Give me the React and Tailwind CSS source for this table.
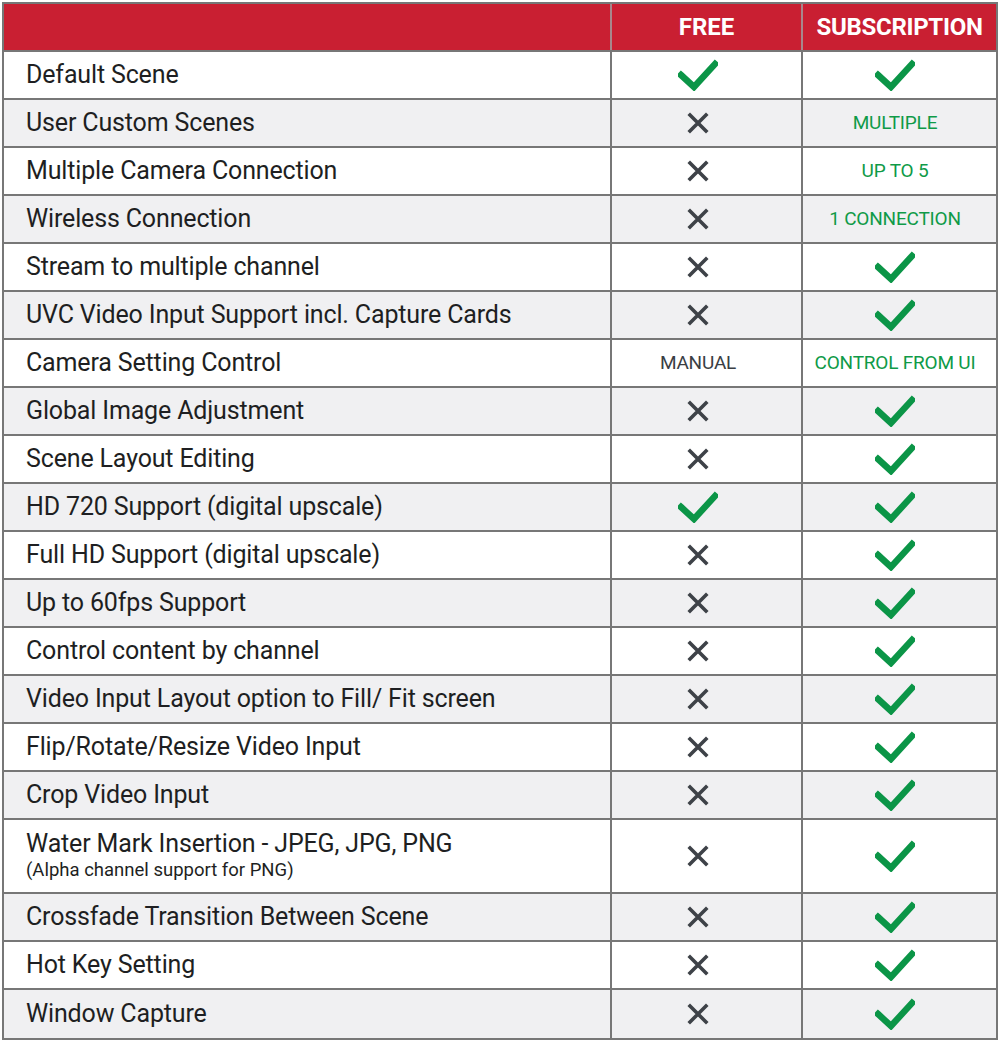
const rows = [
  { label: 'Default Scene', free: 'check', sub: 'check' },
  { label: 'User Custom Scenes', free: 'x', sub: 'MULTIPLE' },
  { label: 'Multiple Camera Connection', free: 'x', sub: 'UP TO 5' },
  { label: 'Wireless Connection', free: 'x', sub: '1 CONNECTION' },
  { label: 'Stream to multiple channel', free: 'x', sub: 'check' },
  { label: 'UVC Video Input Support incl. Capture Cards', free: 'x', sub: 'check' },
  { label: 'Camera Setting Control', free: 'MANUAL', sub: 'CONTROL FROM UI' },
  { label: 'Global Image Adjustment', free: 'x', sub: 'check' },
  { label: 'Scene Layout Editing', free: 'x', sub: 'check' },
  { label: 'HD 720 Support (digital upscale)', free: 'check', sub: 'check' },
  { label: 'Full HD Support (digital upscale)', free: 'x', sub: 'check' },
  { label: 'Up to 60fps Support', free: 'x', sub: 'check' },
  { label: 'Control content by channel', free: 'x', sub: 'check' },
  { label: 'Video Input Layout option to Fill/ Fit screen', free: 'x', sub: 'check' },
  { label: 'Flip/Rotate/Resize Video Input', free: 'x', sub: 'check' },
  { label: 'Crop Video Input', free: 'x', sub: 'check' },
  {
    label: 'Water Mark Insertion - JPEG, JPG, PNG',
    note: '(Alpha channel support for PNG)',
    free: 'x',
    sub: 'check',
  },
  { label: 'Crossfade Transition Between Scene', free: 'x', sub: 'check' },
  { label: 'Hot Key Setting', free: 'x', sub: 'check' },
  { label: 'Window Capture', free: 'x', sub: 'check' },
]

function Check() {
  return (
    <svg width="40" height="32" viewBox="0 0 40 32">
      <polyline
        points="3,16 16,28 37,5"
        fill="none"
        stroke="#0b9547"
        strokeWidth="6.5"
        strokeLinecap="square"
        strokeLinejoin="miter"
      />
    </svg>
  )
}

function Cross() {
  return (
    <svg width="22" height="22" viewBox="0 0 22 22">
      <path d="M3 3 L19 19 M19 3 L3 19" stroke="#3e4248" strokeWidth="3.6" strokeLinecap="square" />
    </svg>
  )
}

function Value({ value, green }) {
  if (value === 'check') return <Check />
  if (value === 'x') return <Cross />
  return (
    <span className={`text-[19px] tracking-[-0.2px] ${green ? 'text-[#0f9a48]' : 'text-[#3a3e44]'}`}>
      {value}
    </span>
  )
}

export default function App() {
  return (
    <div
      className="min-h-[1042px] bg-white pl-[2px] pt-[2px]"
      style={{ fontFamily: 'Roboto, "Liberation Sans", sans-serif' }}
    >
      <div className="w-[996px] border-2 border-[#777777]">
        <div className="grid h-[48px] grid-cols-[608px_191px_1fr] border-b-2 border-[#777777] bg-[#c91f32]">
          <div className="border-r-2 border-[#a8868c]" />
          <div className="flex items-center justify-center border-r-2 border-[#a8868c] text-[24px] font-bold text-white">
            FREE
          </div>
          <div className="flex items-center justify-center text-[24px] font-bold tracking-[-0.3px] text-white">
            SUBSCRIPTION
          </div>
        </div>
        {rows.map((row, i) => (
          <div
            key={row.label}
            className={`grid grid-cols-[608px_191px_1fr] ${
              i < rows.length - 1 ? 'border-b-2 border-[#777777]' : ''
            } ${row.note ? 'h-[74px]' : 'h-[48px]'} ${i % 2 === 0 ? 'bg-white' : 'bg-[#f0f0f2]'}`}
          >
            <div className="flex flex-col justify-center border-r-2 border-[#777777] pl-[22px] text-[#1e1f22]">
              <span className="text-[25px] leading-[28px] tracking-[-0.15px]">{row.label}</span>
              {row.note && <span className="text-[18.5px] leading-[24px]">{row.note}</span>}
            </div>
            <div className="flex items-center justify-center border-r-2 border-[#777777] pr-[17px]">
              <Value value={row.free} />
            </div>
            <div className="flex items-center justify-center pr-[9px]">
              <Value value={row.sub} green />
            </div>
          </div>
        ))}
      </div>
    </div>
  )
}
